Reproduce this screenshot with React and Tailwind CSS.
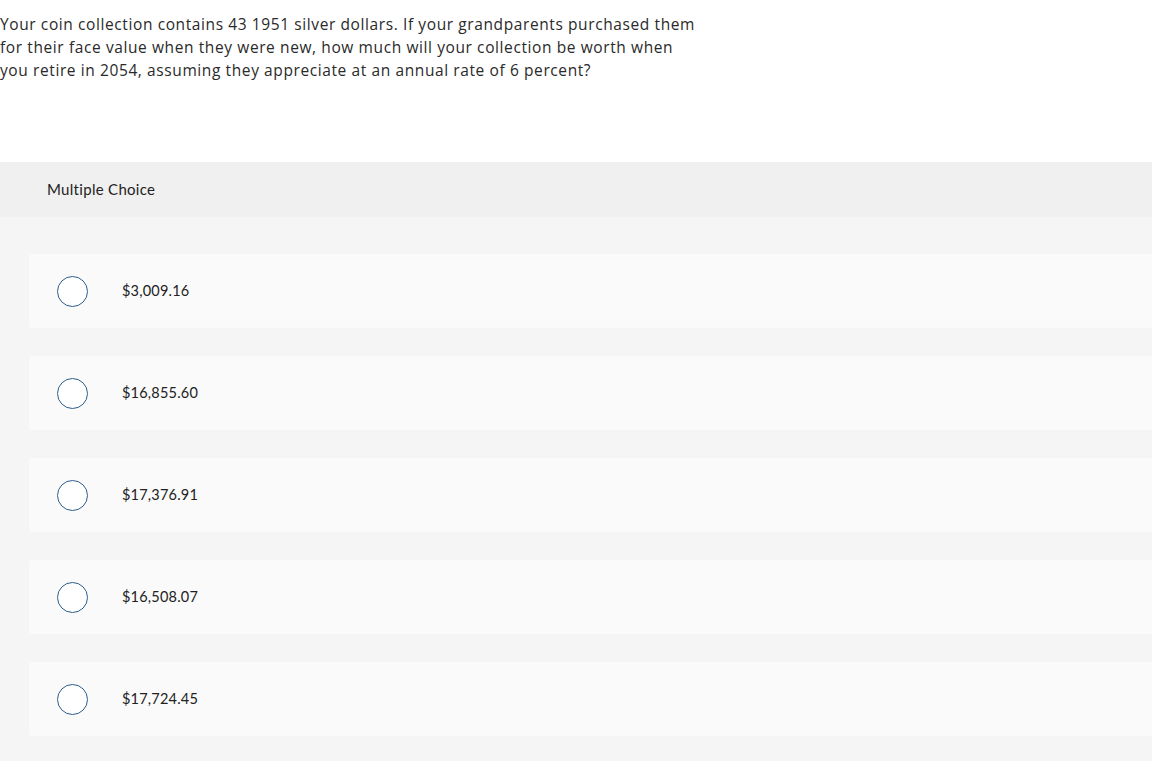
const options = ['$3,009.16', '$16,855.60', '$17,376.91', '$16,508.07', '$17,724.45'];

const Radio = () => (
  <span className="block h-[31px] w-[31px] shrink-0 rounded-full border-[1.5px] border-[#2f5d8c] bg-white" />
);

export default function App() {
  return (
    <div className="min-h-[761px] bg-white text-[#222]" style={{ fontFamily: 'Lato, "Open Sans", Arial, sans-serif' }}>
      <p
        className="whitespace-nowrap pt-[13px] text-[15.5px] leading-[23px] tracking-[0.6px] text-[#2a2a2a]"
        style={{ fontFamily: '"Open Sans", Lato, Arial, sans-serif' }}
      >
        Your coin collection contains 43 1951 silver dollars. If your grandparents purchased them
        <br />
        for their face value when they were new, how much will your collection be worth when
        <br />
        you retire in 2054, assuming they appreciate at an annual rate of 6 percent?
      </p>

      <div className="mt-[80px] flex h-[55px] items-center bg-[#f0f0f0] pl-[47px] text-[15px] tracking-[0.3px]">
        Multiple Choice
      </div>

      <div className="flex flex-col gap-[28px] bg-[#f5f5f5] pb-[26px] pl-[29px] pt-[37px]">
        {options.map((o) => (
          <div key={o} className="flex h-[74px] items-center gap-[34px] rounded-l-[3px] bg-[#fafafa] pl-[28px]">
            <Radio />
            <span className="text-[14.5px] tracking-[0.2px]">{o}</span>
          </div>
        ))}
      </div>
    </div>
  );
}
